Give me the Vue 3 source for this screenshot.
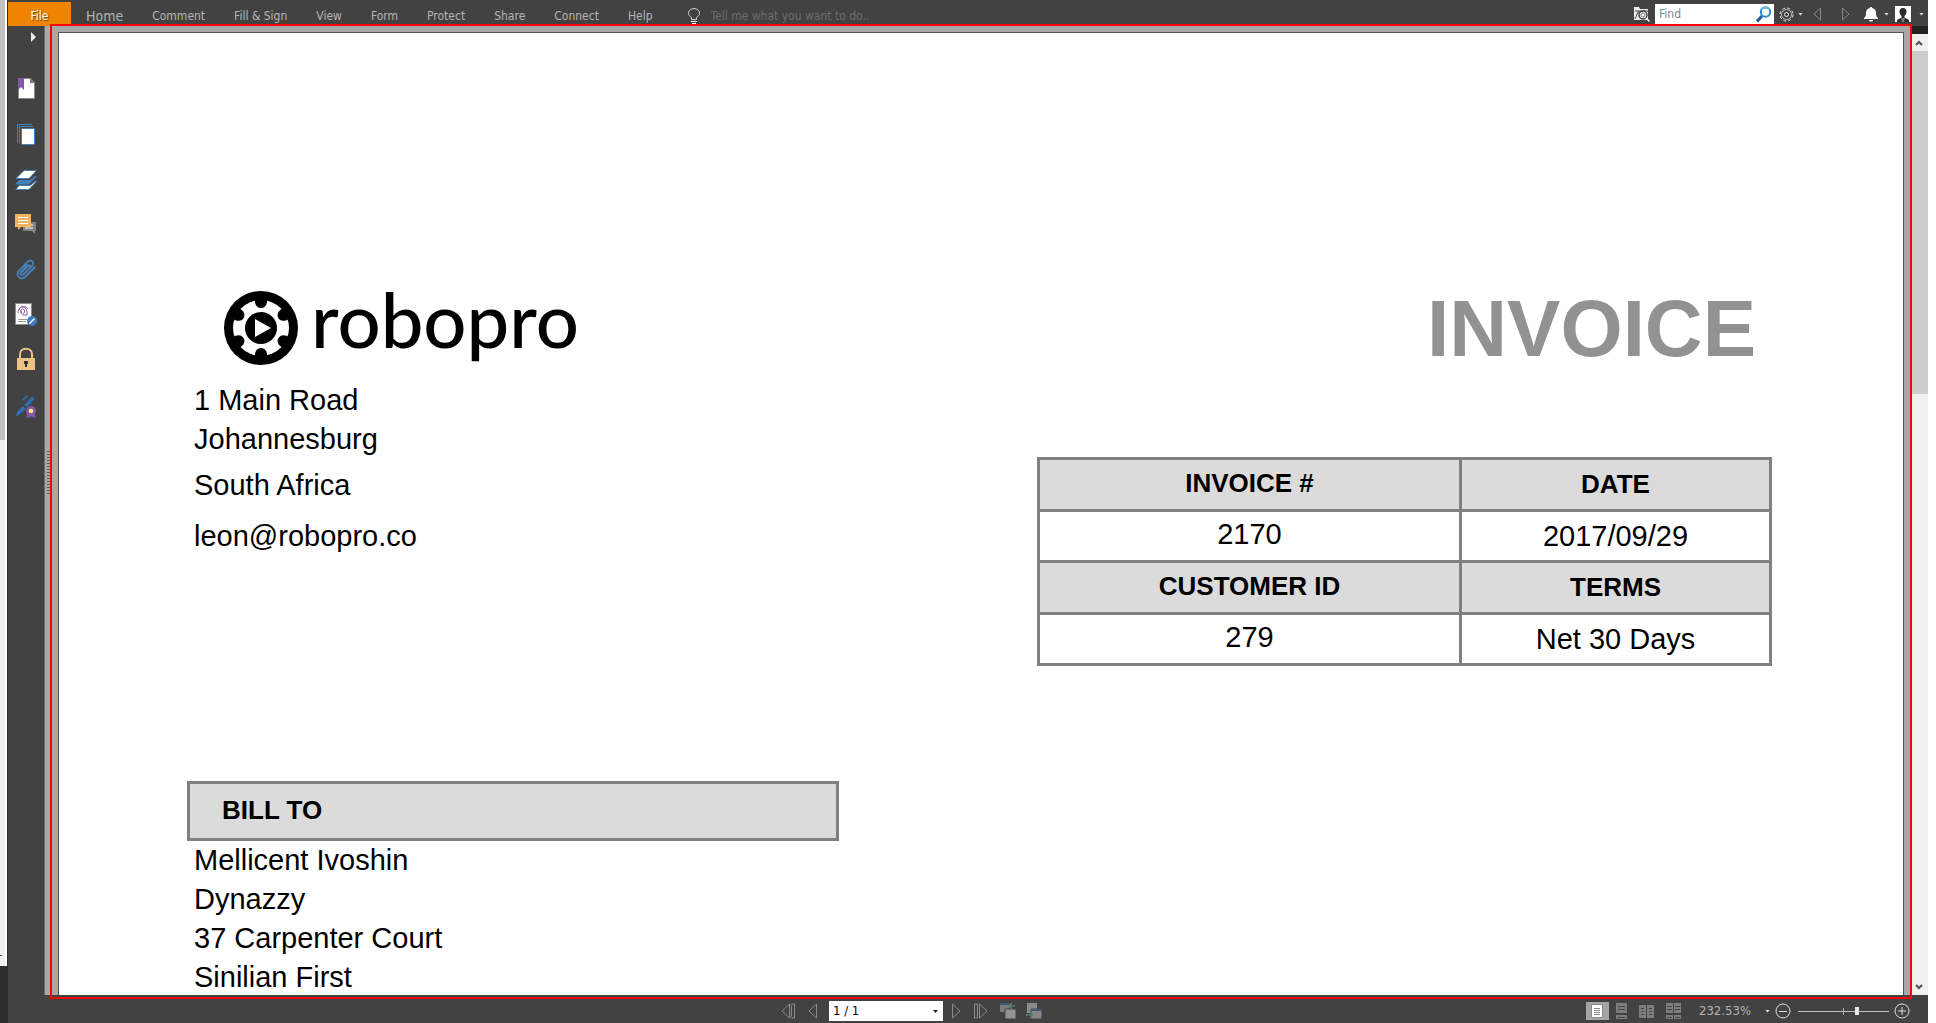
<script setup>
import { ref } from 'vue'

const menus = ['Comment', 'Fill & Sign', 'View', 'Form', 'Protect', 'Share', 'Connect', 'Help']
const find = ref('')
const tell = ref('')
const page = ref('1 / 1')
const zoom = ref(65)
const billTo = ['Mellicent Ivoshin', 'Dynazzy', '37 Carpenter Court', 'Sinilian First']
</script>

<template>
  <div class="desktop">
    <div class="behind">
      <div class="behind-thumb"></div>
      <div class="behind-track"><i></i></div>
      <div class="behind-foot"></div>
    </div>

    <div class="app">
      <header class="menubar">
        <button class="file">File</button>
        <nav class="menus">
          <button class="home">Home</button>
          <button v-for="m in menus" :key="m">{{ m }}</button>
        </nav>
        <label class="tell">
          <svg width="12" height="16" viewBox="0 0 12 16" fill="none" stroke="#d0d0d0">
            <path d="M3.500 11.500V9.500C1.500 8 .5 7 .5 5.200C.5 2.500 3 .5 6 .5s5.500 2 5.500 4.700c0 1.800-1 2.800-3 4.300v2z" />
            <path d="M3 13.500h6M4 15.500h4" stroke="#fff" />
          </svg>
          <input v-model="tell" aria-label="Tell me" placeholder="Tell me what you want to do.." />
        </label>
        <div class="tools">
          <button class="folder" aria-label="Search folder">
            <svg width="16" height="16" viewBox="0 0 16 16">
              <path d="M0 1h5l1 2h8v11H0z" fill="#eee" />
              <path d="M1 5h13M1 13l3-7h3" stroke="#424242" fill="none" />
              <circle cx="9" cy="9" r="4" fill="#eee" stroke="#424242" stroke-width="1.500" />
              <circle cx="9" cy="9" r="2" fill="#fff" stroke="#777" />
              <path d="M12 12l3.500 3.500" stroke="#fff" stroke-width="1.500" />
            </svg>
          </button>
          <label class="find">
            <input v-model="find" aria-label="Find" placeholder="Find" />
            <svg width="16" height="17" viewBox="0 0 16 17" fill="none">
              <path d="M6 10l-5 5.500" stroke="#1d5c9c" stroke-width="3" />
              <circle cx="9.500" cy="6" r="4.700" stroke="#2f8fc4" stroke-width="2" />
              <path d="M5.800 3.500a4.700 4.700 0 0 1 7.400 0" stroke="#63bfdc" stroke-width="2" />
            </svg>
          </label>
          <button class="gear" aria-label="Settings">
            <svg width="15" height="15" viewBox="0 0 15 15" fill="none" stroke="#e6e6e6">
              <circle cx="7.500" cy="7.500" r="6.500" stroke-dasharray="3 2.100" />
              <circle cx="7.500" cy="7.500" r="5" stroke-width=".7" />
              <circle cx="7.500" cy="7.500" r="2" />
            </svg>
            <i class="caret"></i>
          </button>
          <button class="prev" aria-label="Previous result">
            <svg width="9" height="14" viewBox="0 0 9 14" fill="none" stroke="#8a8a8a"><path d="M7.500 1v12L1 7z" /></svg>
          </button>
          <button class="next" aria-label="Next result">
            <svg width="9" height="14" viewBox="0 0 9 14" fill="none" stroke="#8a8a8a"><path d="M1.500 1v12L8 7z" /></svg>
          </button>
          <button class="bell" aria-label="Notifications">
            <svg width="14" height="15" viewBox="0 0 14 15" fill="#fff">
              <path d="M6 0h2v1c3 .7 4 2.500 4 5 0 3 .5 4 2 5v1H0v-1c1.500-1 2-2 2-5 0-2.500 1-4.300 4-5zM5 13h4c0 2-4 2-4 0z" />
            </svg>
            <i class="caret"></i>
          </button>
          <button class="user" aria-label="Account">
            <svg width="16" height="16" viewBox="0 0 16 16">
              <path d="M0 0h16v16H0z" fill="#fff" />
              <path d="M8 2c-2.500 0-3.500 1.500-3.500 3.500S5.500 9 6.500 10v1.500L2 14v2h12v-2l-4.500-2.500V10c1-1 2-2.500 2-4.500S10.500 2 8 2z" fill="#2b2b2b" />
              <path d="M6 12l1 4h2l1-4z" fill="#777" />
            </svg>
            <i class="caret"></i>
          </button>
        </div>
      </header>

      <main class="workspace">
        <aside class="sidebar">
          <button class="expand" aria-label="Expand panel">
            <svg width="6" height="10" viewBox="0 0 6 10"><path d="M0 0l5 5-5 5z" fill="#eee" /></svg>
          </button>
          <button aria-label="Bookmarks">
            <svg width="24" height="24" viewBox="0 0 24 24">
              <path d="M4.500 1.500h12l4 4v16h-16z" fill="#fff" stroke="#8c8c8c" />
              <path d="M16 1v5h5z" fill="#777" />
              <path d="M4 1h6v12l-3-3-3 3z" fill="#8656a8" />
            </svg>
          </button>
          <button aria-label="Pages">
            <svg width="24" height="24" viewBox="0 0 24 24" fill="none" stroke="#4680b8">
              <path d="M3.500 21V2.500H18M5.500 22V4.500H19" />
              <path d="M7.500 6.500h13v16h-13z" fill="#fff" />
            </svg>
          </button>
          <button aria-label="Layers">
            <svg width="24" height="24" viewBox="0 0 24 24">
              <path d="M10 3.500h12.500L15 11.500H2z" fill="#fff" stroke="#4680b8" />
              <path d="M5 13h11l5-4h2l-8 8.500H1z" fill="#4680b8" />
              <path d="M5 18.500h11l6-4.500h1l-8 8.500H2z" fill="#fff" stroke="#4680b8" />
            </svg>
          </button>
          <button aria-label="Comments">
            <svg width="24" height="24" viewBox="0 0 24 24">
              <path d="M9 10h13v9h-1v3l-3-3H9z" fill="#838383" />
              <path d="M11 16h8M17 13h2" stroke="#fff" />
              <path d="M1 2h16v13H7l-3 3v-3H1z" fill="#f4b45f" />
              <path d="M4 5.500h10M4 8.500h10M4 11.500h10" stroke="#fff" />
            </svg>
          </button>
          <button aria-label="Attachments">
            <svg width="24" height="24" viewBox="0 0 24 24" fill="none" stroke="#4680b8" stroke-width="1.800" stroke-linecap="round">
              <path d="M13 8l-6 7c-1.500 2 .8 4 2.600 2.300L18 9c3-3.200-1-7.500-4.500-4.200L5 13.500c-4 4.500 1.500 10.500 6 6.500l10-10" />
              <path d="M8 15l6-6c1.500-1.300 3 .5 2 1.800" />
            </svg>
          </button>
          <button aria-label="Signatures">
            <svg width="24" height="24" viewBox="0 0 24 24" fill="none">
              <path d="M1.500 1.500h16v21h-16z" fill="#fff" stroke="#8c8c8c" />
              <path d="M4 11c0-8 9-8 9 0v2M6.500 10.500c0-5 5-4 4-.5-1 3-4 3-3-.5M5 8c1-4 7-5 9-1M9 13h4" stroke="#8656a8" />
              <path d="M4 17.500h9M4 19.500h8" stroke="#999" />
              <circle cx="18" cy="19" r="5" fill="#3c7cbd" />
              <path d="M15.500 21.500l5-5" stroke="#fff" stroke-width="1.500" />
            </svg>
          </button>
          <button aria-label="Security">
            <svg width="24" height="24" viewBox="0 0 24 24">
              <path d="M6 12V7c0-7 12-7 12 0v5" fill="none" stroke="#edc383" stroke-width="2" />
              <path d="M3 11h18v12H3z" fill="#edc383" />
              <path d="M10 14h4v3h-1v3h-2v-3h-1z" fill="#333" />
            </svg>
          </button>
          <button aria-label="Certificates">
            <svg width="24" height="26" viewBox="0 0 24 26">
              <path d="M2 25l1-5 6-6 3 3-6 5zM10 13l8-8c2 0 3 2 2 3l-7 7zM8 8l5-5 1 1-5 5z" fill="#2d6fb4" />
              <path d="M14 20l-2 6 3-1 1 1 1-4 1 4 1-1 3 1-2-6z" fill="#8656a8" />
              <circle cx="17" cy="19" r="5" fill="#8656a8" />
              <circle cx="17" cy="19" r="2.300" fill="#fde58a" />
            </svg>
          </button>
        </aside>
        <div class="splitter"><i></i></div>

        <section class="canvas">
          <article class="paper">
            <div class="top">
              <div class="sender">
                <div class="logo">
                  <svg width="74" height="74" viewBox="-37 -37 74 74">
                    <circle r="37" />
                    <circle r="28" fill="#fff" />
                    <g v-for="a in [0, 60, 120, 180, 240, 300]" :key="a" :transform="`rotate(${a})`">
                      <path d="M-6-32H6v6c-1 8-11 8-12 0z" />
                    </g>
                    <circle r="16" />
                    <path d="M-6-9L10 0-6 9z" fill="#fff" />
                  </svg>
                  <span>robopro</span>
                </div>
                <address>
                  <p>1 Main Road</p>
                  <p>Johannesburg</p>
                  <p class="country">South Africa</p>
                  <p class="mail">leon@robopro.co</p>
                </address>
              </div>
              <div class="summary">
                <h1>INVOICE</h1>
                <table>
                  <tbody>
                    <tr><th>INVOICE #</th><th>DATE</th></tr>
                    <tr><td>2170</td><td>2017/09/29</td></tr>
                    <tr><th>CUSTOMER ID</th><th>TERMS</th></tr>
                    <tr><td>279</td><td>Net 30 Days</td></tr>
                  </tbody>
                </table>
              </div>
            </div>
            <section class="bill">
              <h2>BILL TO</h2>
              <address><p v-for="l in billTo" :key="l">{{ l }}</p></address>
            </section>
          </article>
        </section>

        <div class="scroll">
          <div class="scroll-cap"></div>
          <button aria-label="Scroll up">
            <svg width="8" height="6" viewBox="0 0 8 6" fill="none" stroke="#505050" stroke-width="2"><path d="M1 5l3-3 3 3" /></svg>
          </button>
          <div class="scroll-track"><div class="scroll-thumb"></div></div>
          <button aria-label="Scroll down">
            <svg width="8" height="6" viewBox="0 0 8 6" fill="none" stroke="#505050" stroke-width="2"><path d="M1 1l3 3 3-3" /></svg>
          </button>
        </div>
      </main>

      <footer class="status">
        <div class="pager">
          <button aria-label="First page">
            <svg width="15" height="16" viewBox="0 0 15 16" fill="none" stroke="#8a8a8a"><path d="M8.500 1v14L1 8zM8.500 1l2 2v10l-2 2M10.500 1h3v14h-3" /></svg>
          </button>
          <button aria-label="Previous page">
            <svg width="10" height="16" viewBox="0 0 10 16" fill="none" stroke="#8a8a8a"><path d="M8.500 1v14L1 8z" /></svg>
          </button>
          <div class="page-select">
            <select v-model="page" aria-label="Page"><option>1 / 1</option></select>
          </div>
          <button aria-label="Next page">
            <svg width="10" height="16" viewBox="0 0 10 16" fill="none" stroke="#8a8a8a"><path d="M1.500 1v14L9 8z" /></svg>
          </button>
          <button aria-label="Last page">
            <svg width="15" height="16" viewBox="0 0 15 16" fill="none" stroke="#8a8a8a"><path d="M6.500 1v14L14 8zM4.500 1h-3v14h3z" /></svg>
          </button>
          <div class="views">
            <button aria-label="Previous view">
              <svg width="16" height="16" viewBox="0 0 16 16">
                <path d="M0 1h9v8H0z" fill="#7c7c7c" /><path d="M0 0h9v2H0z" fill="#3f5878" />
                <path d="M5 6h11v10H5z" fill="#929292" stroke="#424242" />
                <path d="M15 3h-6m3-3L9 3l3 3" stroke="#5f7f72" stroke-width="1.500" fill="none" />
              </svg>
            </button>
            <button aria-label="Next view">
              <svg width="16" height="16" viewBox="0 0 16 16">
                <path d="M1 0h10v10H1z" fill="#8a8a8a" />
                <path d="M5 6h11v10H5z" fill="#858585" stroke="#424242" /><path d="M6 6h10v2H6z" fill="#3f5878" />
                <path d="M0 12h6M4 9l3 3-3 3" stroke="#5f7f72" stroke-width="1.500" fill="none" />
              </svg>
            </button>
          </div>
        </div>
        <div class="display">
          <div class="modes">
            <button class="active" aria-label="Single page">
              <svg width="12" height="14" viewBox="0 0 12 14"><path d="M.5.5h11v13H.5z" fill="#fff" stroke="#8a8a80" /><path d="M3 4.500h6M3 6.500h6M3 8.500h6M3 10.500h6" stroke="#8a8a8a" /></svg>
            </button>
            <button aria-label="Continuous">
              <svg width="11" height="16" viewBox="0 0 11 16"><path d="M0 0h11v10H0zM0 12h11v4H0z" fill="#7d7d7d" /><path d="M2 3.500h7M2 6.500h7M2 14.500h7" stroke="#444" /></svg>
            </button>
            <button aria-label="Facing">
              <svg width="15" height="13" viewBox="0 0 15 13"><path d="M0 0h7v13H0zM8 0h7v13H8z" fill="#7d7d7d" /><path d="M2 3.500h3M2 6.500h3M2 9.500h3M10 3.500h3M10 6.500h3M10 9.500h3" stroke="#444" /></svg>
            </button>
            <button aria-label="Continuous facing">
              <svg width="15" height="16" viewBox="0 0 15 16"><path d="M0 0h7v10H0zM8 0h7v10H8zM0 12h7v4H0zM8 12h7v4H8z" fill="#7d7d7d" /><path d="M1 3.500h5M1 6.500h5M9 3.500h5M9 6.500h5M1 14.500h5M9 14.500h5" stroke="#444" /></svg>
            </button>
          </div>
          <button class="percent">232.53%<i class="caret"></i></button>
          <button aria-label="Zoom out">
            <svg width="16" height="16" viewBox="0 0 16 16" fill="none" stroke="#e0e0e0"><circle cx="8" cy="8" r="7" /><path d="M4 8.500h8" /></svg>
          </button>
          <input v-model="zoom" type="range" min="0" max="100" aria-label="Zoom" />
          <button aria-label="Zoom in">
            <svg width="16" height="16" viewBox="0 0 16 16" fill="none" stroke="#e0e0e0"><circle cx="8" cy="8" r="7" /><path d="M4 8h8M8 4v8" /></svg>
          </button>
        </div>
      </footer>

      <div class="frame"></div>
    </div>
  </div>
</template>

<style>
body { background: #fff; overflow: hidden; }
</style>

<style scoped>
* { box-sizing: border-box; }
button { appearance: none; border: 0; padding: 0; margin: 0; background: none; color: inherit; font: inherit; display: flex; align-items: center; justify-content: center; white-space: nowrap; }
svg { display: block; flex: none; }
p, h1, h2 { margin: 0; }
input, select { font: inherit; border: 0; margin: 0; outline: 0; }

.desktop { display: flex; height: 100vh; padding-right: 8px; font: 12px/16px "DejaVu Sans Condensed", "DejaVu Sans", sans-serif; }
.behind { width: 8px; flex: none; display: flex; flex-direction: column; background: #2d2d2d; }
.behind-thumb { height: 440px; background: #c2c2c2; border-right: 2px solid #fff; margin-right: 1px; }
.behind-track { flex: 1; background: #f0f0f0; border-right: 2px solid #fff; margin-right: 1px; display: flex; align-items: flex-end; }
.behind-track i { width: 2px; height: 1px; margin-bottom: 10px; background: #444; }
.behind-foot { height: 57px; }

.app { position: relative; flex: 1; min-width: 0; display: flex; flex-direction: column; background: #424242; color: #b4b4b4; }
.menubar { height: 26px; flex: none; display: flex; align-items: center; padding-top: 2px; }
.file { width: 63px; height: 24px; background: #f08300; color: #fff; padding-top: 4px; text-shadow: 1px 1px 1px #6b4a20; }
.menus { display: flex; gap: 29px; padding: 4px 0 0 15px; }
.home { font-size: 14px; }
.tell { display: flex; align-items: center; gap: 11px; margin-left: 35px; padding-top: 4px; }
.tell input { width: 200px; padding: 0; background: none; }
.tell input::placeholder { color: #6c6c6c; opacity: 1; }
.tools { margin-left: auto; display: flex; align-items: center; height: 24px; padding-right: 4px; }
.caret { width: 5px; height: 3px; background: #e4e4e4; clip-path: polygon(0 0, 100% 0, 50% 100%); }
.find { display: flex; align-items: center; width: 119px; height: 20px; margin: 0 5px; padding: 0 2px 0 4px; background: #fff; }
.find input { flex: 1; min-width: 0; padding: 0; }
.find input::placeholder { color: #7b8798; opacity: 1; }
.gear { gap: 4px; }
.prev { margin-left: 10px; }
.next { margin-left: 19px; }
.bell { margin-left: 14px; gap: 6px; }
.user { margin-left: 6px; gap: 8px; }

.workspace { flex: 1; min-height: 0; display: flex; }
.sidebar { width: 36px; flex: none; display: flex; flex-direction: column; align-items: center; gap: 21px; }
.expand { padding: 6px 0 8px 16px; }
.sidebar button:nth-child(2) { margin-top: 6px; }
.splitter { width: 8px; flex: none; background: #a8a8a8; border-left: 1px solid #6c6c6c; display: flex; align-items: center; justify-content: flex-end; padding-bottom: 76px; }
.splitter i { width: 5px; height: 44px; background: repeating-linear-gradient(#606060 0 1px, transparent 1px 3px); }
.canvas { flex: 1; min-width: 0; padding: 6px 6px 0; background: #a8a8a8; display: flex; overflow: hidden; }
.paper { flex: 1; min-width: 0; height: 100%; overflow: hidden; background: #fff; border: 1px solid #555; border-bottom: 0; color: #000; font: 29px/39px "Liberation Sans", Arial, sans-serif; padding: 255px 131px 0 128px; }
.top { display: flex; justify-content: space-between; }
address { font-style: normal; padding-left: 7px; }
.logo { display: flex; align-items: center; gap: 13px; height: 74px; margin: 3px 0 16px 37px; }
.logo span { font: 500 76px/52px Lato, sans-serif; padding-bottom: 18px; }
.country { margin-top: 7px; }
.mail { margin-top: 12px; }
.summary { width: 735px; }
h1 { font-size: 80px; line-height: 82px; color: #929292; text-align: right; padding-right: 16px; margin-bottom: 87px; }
table { width: 100%; border-collapse: collapse; table-layout: fixed; }
th, td { border: 3px solid #808080; height: 51px; padding: 0 0 3px; text-align: center; vertical-align: middle; }
th { height: 52px; font-size: 26px; background: #dbdbdb; }
th:first-child, td:first-child { width: 422px; }
th:last-child, td:last-child { padding-bottom: 0; }
.bill { margin-top: 115px; }
h2 { width: 652px; height: 60px; border: 3px solid #808080; background: #dbdbdb; font-size: 26px; line-height: 52px; padding-left: 32px; }

.scroll { width: 18px; flex: none; display: flex; flex-direction: column; background: #f0f0f0; }
.scroll-cap { height: 8px; background: #222; }
.scroll button { height: 17px; }
.scroll-track { flex: 1; }
.scroll-thumb { height: 37%; background: #cdcdcd; }

.status { height: 28px; flex: none; display: flex; align-items: center; justify-content: space-between; padding: 4px 18px 0 773px; }
.pager, .display, .modes, .views { display: flex; align-items: center; }
.pager { gap: 12px; }
.views { gap: 10px; }
.page-select { position: relative; width: 114px; height: 20px; margin: 0 -4px 0 -1px; }
.page-select select { appearance: none; width: 100%; height: 100%; padding: 0 4px; background: #fff; border-radius: 0; color: #000; font-size: 13px; }
.page-select::after { content: ""; position: absolute; right: 5px; top: 9px; width: 5px; height: 3px; background: #222; clip-path: polygon(0 0, 100% 0, 50% 100%); }
.modes { gap: 12px; }
.modes .active { width: 23px; height: 18px; background: #a0a6a9; margin-right: -5px; }
.percent { font-size: 13px; margin: 0 5px 0 18px; gap: 14px; }
.display input { appearance: none; width: 91px; height: 16px; margin: 0 5px 0 7px; background: linear-gradient(#b0b0b0, #b0b0b0) 45px 5px / 1px 7px no-repeat, linear-gradient(#c0c0c0, #c0c0c0) 0 8px / 100% 1px no-repeat; }
.display input::-webkit-slider-thumb { appearance: none; width: 4px; height: 8px; background: #e6e6e6; }

.frame { position: absolute; inset: 24px 16px 24px 42px; border: 2px solid #f00; pointer-events: none; }
</style>
